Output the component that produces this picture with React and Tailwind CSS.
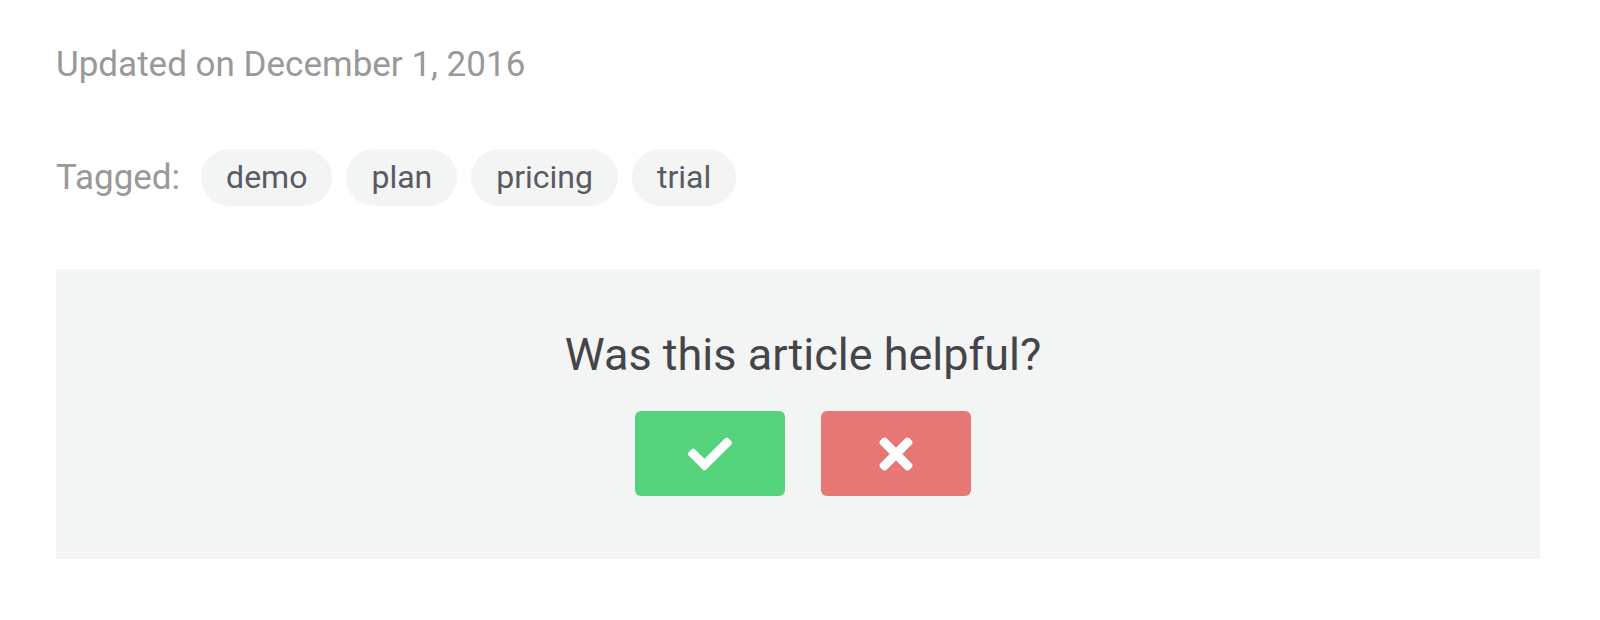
import { FaCheck, FaTimes } from "react-icons/fa";

const tags = ["demo", "plan", "pricing", "trial"];

export default function App() {
  return (
    <div
      className="w-[1600px] h-[620px] bg-white overflow-hidden"
      style={{ fontFamily: "Roboto, 'Liberation Sans', sans-serif" }}
    >
      <div className="ml-[56px] w-[1484px] pt-[45px] flex flex-col">
        {/* updated date */}
        <p className="text-[35px] leading-[40px] text-[#999999]">Updated on December 1, 2016</p>

        {/* tags */}
        <div className="mt-[64px] flex items-center">
          <span className="text-[35px] leading-[57px] text-[#999999] mr-[21px]">Tagged:</span>
          <div className="flex gap-[14px]">
            {tags.map((t) => (
              <a
                key={t}
                href="#"
                className="h-[57px] px-[25px] rounded-full bg-[#f3f4f4] text-[32px] leading-[57px] text-[#5a5a63]"
              >
                {t}
              </a>
            ))}
          </div>
        </div>

        {/* feedback box */}
        <div className="mt-[63px] h-[290px] bg-[#f3f4f4] flex flex-col items-center pt-[58px] pl-[10px]">
          <h3 className="text-[45px] leading-[56px] text-[#444449]">Was this article helpful?</h3>
          <div className="mt-[28px] flex gap-[36px]">
            <button className="w-[150px] h-[85px] rounded-[6px] bg-[#55d27c] flex items-center justify-center text-white">
              <FaCheck className="w-[44px] h-[44px]" />
            </button>
            <button className="w-[150px] h-[85px] rounded-[6px] bg-[#e77775] flex items-center justify-center text-white">
              <FaTimes className="w-[48px] h-[48px]" />
            </button>
          </div>
        </div>
      </div>
    </div>
  );
}
